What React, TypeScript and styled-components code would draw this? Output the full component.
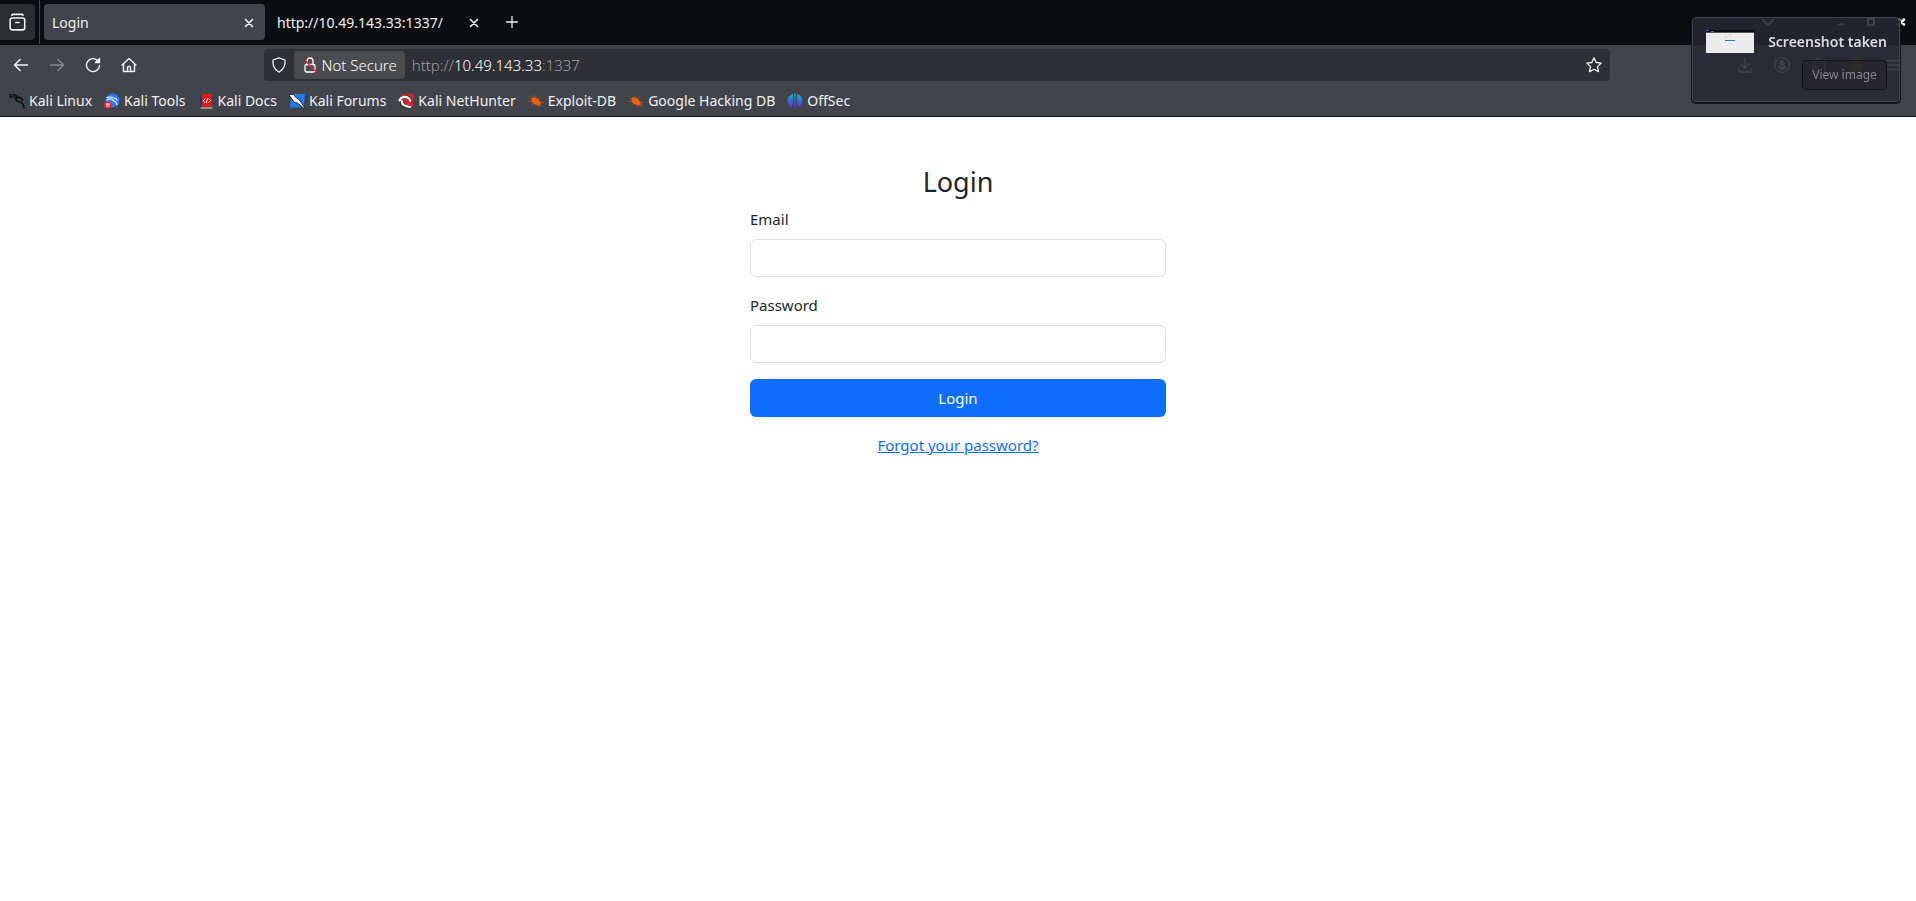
import React from "react";
import styled, { createGlobalStyle } from "styled-components";

const Global = createGlobalStyle`
  * { box-sizing: border-box; }
  body { margin: 0; background: #fff; font: 400 15px/24px "Noto Sans", sans-serif; color: #212529; }
  button, input { font: inherit; }
`;

const Chrome = styled.header`
  background: #42444c;
  color: #f0f0f1;
  font-size: 14px;
  border-bottom: 1px solid #0c0d11;
`;
const IconButton = styled.button<{ $w?: number; $dim?: boolean }>`
  display: flex;
  align-items: center;
  justify-content: center;
  width: ${(p) => p.$w ?? 36}px;
  height: 32px;
  padding: 0;
  border: 0;
  background: transparent;
  color: ${(p) => (p.$dim ? "#85868b" : "#f0f0f1")};
`;
const TabStrip = styled.div`
  display: flex;
  align-items: center;
  height: 45px;
  padding-bottom: 1px;
  background: #0c0d11;
`;
const ViewButton = styled(IconButton)`
  height: 36px;
  background: #2d2e31;
  border-radius: 0 4px 4px 0;
`;
const Divider = styled.span`
  width: 1px;
  height: 44px;
  margin: 0 4px;
  background: #42444c;
`;
const Tab = styled.div<{ $active?: boolean }>`
  display: flex;
  align-items: center;
  justify-content: space-between;
  width: 221px;
  height: 36px;
  padding: 2px 4px 0 8px;
  margin-right: 4px;
  border-radius: 4px;
  background: ${(p) => (p.$active ? "#42444c" : "transparent")};
`;
const WindowButtons = styled.div`
  display: flex;
  margin-left: auto;
`;
const ListTabs = styled(IconButton)`
  margin-right: 40px;
`;
const Toolbar = styled.div`
  display: flex;
  align-items: center;
  justify-content: space-between;
  height: 40px;
  padding: 0 5px 0 3px;
`;
const Group = styled.div`
  display: flex;
`;
const UrlBar = styled.div`
  display: flex;
  align-items: center;
  flex: 0 1 1346px;
  height: 32px;
  background: #2f3036;
  border-radius: 4px;
  font-size: 15px;
  font-weight: 300;
`;
const Security = styled.button`
  display: flex;
  align-items: center;
  gap: 4px;
  height: 28px;
  padding: 0 8px;
  border: 0;
  border-radius: 4px;
  background: #4b4c50;
  color: #fff;
`;
const Address = styled.span`
  flex: 1;
  padding-left: 7px;
  color: #9d9da3;
  b { font-weight: inherit; color: #fff; }
`;
const Bookmarks = styled.nav`
  display: flex;
  gap: 12px;
  height: 31px;
  padding: 0 9px;
  align-items: center;
`;
const Bookmark = styled.a`
  display: flex;
  align-items: center;
  gap: 4px;
  color: #f0f0f1;
  text-decoration: none;
`;
const Toast = styled.aside`
  position: fixed;
  top: 17px;
  right: 16px;
  width: 208px;
  padding: 12px 12px 11px 13px;
  border: 1px solid #42444f;
  border-radius: 4px;
  background: rgba(38, 39, 51, 0.87);
  box-shadow: 0 1px 0 1px #15161b;
`;
const ToastHead = styled.div`
  display: flex;
  justify-content: space-between;
  align-items: flex-start;
  color: #dcdcdf;
  font-size: 14px;
  line-height: 24px;
`;
const ToastTitle = styled.strong`
  font-weight: 600;
`;
const ToastButton = styled.button`
  display: block;
  margin: 6px 0 0 auto;
  width: 85px;
  height: 30px;
  padding: 0;
  border: 1px solid #111217;
  border-radius: 4px;
  background: rgba(38, 37, 43, 0.6);
  color: #85868b;
  font-size: 12px;
`;
const Form = styled.form`
  display: flex;
  flex-direction: column;
  width: 100%;
  max-width: 416px;
  margin: 48px auto;
`;
const Title = styled.h1`
  margin: 0 0 8px;
  font-size: 27px;
  line-height: 34px;
  font-weight: 400;
  text-align: center;
`;
const Label = styled.label`
  margin-bottom: 8px;
`;
const Field = styled.input`
  height: 38px;
  margin-bottom: 16px;
  padding: 6px 12px;
  border: 1px solid #dee2e6;
  border-radius: 6px;
`;
const Submit = styled.button`
  height: 38px;
  margin-bottom: 16px;
  border: 0;
  border-radius: 6px;
  background: #0d6efd;
  color: #fff;
`;
const Forgot = styled.a`
  align-self: center;
  color: #0d6efd;
`;

const Svg = ({ s = 16, children, w = 1.3 }: { s?: number; w?: number; children: React.ReactNode }) => (
  <svg width={s} height={s} viewBox="0 0 16 16" fill="none" stroke="currentColor" strokeWidth={w} strokeLinecap="round" strokeLinejoin="round" aria-hidden="true">{children}</svg>
);
const Close = () => <Svg w={1.6}><path d="M4.500 4.500l7 7M11.500 4.500l-7 7" /></Svg>;
const Bug = () => (
  <Svg>
    <path d="M3 5.500l3.500-1.500 3.500 2 3 4-1 2.500-4-.5-4-2.500z" fill="#f0620c" stroke="none" />
    <path d="M1 4.500l3 2M.5 8.500h4M3.500 12l3-2M7.500 2.500l.5 3M11 4l-.5 3M10.500 14l-1-3M15.500 9.500H12M4 3l1.500 2M14 13l-2-1.500" stroke="#c85518" strokeWidth=".7" />
  </Svg>
);
const Thumbnail = () => (
  <svg width="48" height="23" viewBox="0 0 48 23" aria-hidden="true">
    <path d="M0 0h48v23H0z" fill="#ececec" />
    <path d="M0 0h48v2H0z" fill="#0c0d11" />
    <path d="M0 2h48v1H0z" fill="#55555c" />
    <path d="M0 0h3v1H0zM5 1h3v1H5z" fill="#2a61b0" />
    <path d="M23 5h2M19 7h2" stroke="#c4c4c8" />
    <path d="M19 10.500h10" stroke="#2277ee" />
  </svg>
);

const bookmarks: [string, React.ReactNode][] = [
  ["Kali Linux", (
    <Svg>
      <path d="M.5 2c3-.8 6 .2 8.500 1.500M1.500 4c3-.5 5.500 0 7.500 1M0 3.500l2 1M5 1.500l3 1.500" stroke="#08090b" strokeWidth="1" />
      <path d="M8 4c-2.500 2.500-.5 4.500 3 5 2.500.5 3.500 2.500 4 6M8.500 4.500c2.500-.3 4.500 1 5 3" stroke="#08090b" strokeWidth="1.500" />
    </Svg>
  )],
  ["Kali Tools", (
    <Svg>
      <circle cx="8.500" cy="7.500" r="7" fill="#2777ff" stroke="none" />
      <path d="M3 4.500c3-1 5-.5 7 .5M3 7c3-2 5-1 6.500.5S12 8 13 11.500M10 5q2 0 3 2" stroke="#e9f1ff" strokeWidth="1.200" />
      <circle cx="3.800" cy="12.200" r="3.600" fill="#e5252b" stroke="none" />
      <path d="M2.200 11h3.400M3 11v2.800M4.800 11v2.800" stroke="#fff" strokeWidth=".8" />
    </Svg>
  )],
  ["Kali Docs", (
    <Svg>
      <path d="M2 1h2v14H2z" fill="#173a74" stroke="none" />
      <path d="M4 1h10v13H4z" fill="#e01818" stroke="none" />
      <path d="M3 15h11" stroke="#ddd" strokeWidth="1" />
      <path d="M6.800 6L5.300 7.700l1.500 1.700M11 5.800l1.500 1.700L11 9.200M9.600 5.500L8.300 9.700" stroke="#fff" strokeWidth="1" />
    </Svg>
  )],
  ["Kali Forums", (
    <Svg>
      <path d="M2 1h14l-1.500 13.500H1z" fill="#1e7cf5" stroke="none" />
      <path d="M0 1.500l4.500 0 3 3.500 3 2 5 7.500-1 .5-6-5-3-.5-3-4z" fill="#fff" stroke="#15181d" strokeWidth=".9" />
    </Svg>
  )],
  ["Kali NetHunter", (
    <Svg>
      <path d="M3 1.500L16 1l-1.500 13-5 1z" fill="#e8202e" stroke="none" />
      <path d="M2 8c1-5 9-6 11 0M3.500 8c-1 4 3 6 8 6" stroke="#15181d" strokeWidth="3" />
      <path d="M1.500 7.500c2-5 9-5 11 .5M4 8c-1 3.500 3 5.500 8 6" stroke="#fff" strokeWidth="2.200" />
      <path d="M6 9c1-2 3-2 4 0l1 2c-2 0-4 0-5-2z" fill="#e8202e" stroke="none" />
    </Svg>
  )],
  ["Exploit-DB", <Bug />],
  ["Google Hacking DB", <Bug />],
  ["OffSec", (
    <svg width="16" height="16" viewBox="0 0 16 16" aria-hidden="true">
      <defs><linearGradient id="os" gradientUnits="userSpaceOnUse" x1="8" y1="1" x2="8" y2="15"><stop stopColor="#12b0bf" /><stop offset="1" stopColor="#5a2be0" /></linearGradient></defs>
      <path d="M6 1v10l-1.500 3C2 13 .5 10.500 .5 7.500S2.500 2 6 1zM10 1v10l1.500 3c2.500-1 4-3.500 4-6.500S13.500 2 10 1zM7.300 .5h1.400V16H7.300z" fill="url(#os)" />
    </svg>
  )],
];

export default function App() {
  return (
    <>
      <Global />
      <Chrome>
        <TabStrip>
          <ViewButton $w={35} aria-label="View tabs"><Svg s={18} w={1.4}><rect x="1" y="4.500" width="13" height="10.500" rx="2" /><path d="M2.500 2q.2-.8 1-.8h8q.8 0 1 .8M6 8.500h3" /></Svg></ViewButton>
          <Divider />
          <Tab $active>Login<IconButton $w={24} aria-label="Close tab"><Close /></IconButton></Tab>
          <Tab>http://10.49.143.33:1337/<IconButton $w={24} aria-label="Close tab"><Close /></IconButton></Tab>
          <IconButton aria-label="New tab"><Svg><path d="M8 2.500v11M2.500 8h11" /></Svg></IconButton>
          <WindowButtons>
            <ListTabs aria-label="List tabs"><Svg w={1.500}><path d="M2.500 5.500L8 11l5.500-5.500" /></Svg></ListTabs>
            <IconButton $w={30} aria-label="Minimize"><Svg w={2}><path d="M6 10.500h4" /></Svg></IconButton>
            <IconButton $w={30} aria-label="Maximize"><Svg w={2}><rect x="5" y="5" width="6" height="6" /></Svg></IconButton>
            <IconButton $w={30} aria-label="Close"><Svg w={2.500}><path d="M6 5.500l5 5M11 5.500l-5 5" /></Svg></IconButton>
          </WindowButtons>
        </TabStrip>
        <Toolbar>
          <Group>
            <IconButton aria-label="Back"><Svg w={1.500}><path d="M14.500 8H1.500M7 2.500L1.500 8 7 13.500" /></Svg></IconButton>
            <IconButton $dim aria-label="Forward"><Svg w={1.500}><path d="M1.500 8h13M9 2.500L14.500 8 9 13.500" /></Svg></IconButton>
            <IconButton aria-label="Reload"><Svg w={1.400}><path d="M14.500 8.500A6.500 6.500 0 1 1 12.500 3.400L14 5" /><path d="M14.500 1.500v4h-4z" fill="currentColor" /></Svg></IconButton>
            <IconButton aria-label="Home"><Svg w={1.400}><path d="M1 8l7-6.500L15 8M2.500 7v7.500h11V7M6.500 14v-3.500q0-1 1-1h1q1 0 1 1V14" /></Svg></IconButton>
          </Group>
          <UrlBar>
            <IconButton $w={30} aria-label="Protection"><Svg><path d="M8 .8l6 2.200c.6 5.500-1.500 9.500-6 12.200C3.500 12.500 1.400 8.500 2 3z" /></Svg></IconButton>
            <Security><Svg><rect x="3" y="7.500" width="10" height="7.500" rx="1.500" /><path d="M5 7.500V4a3 3 0 0 1 6 0v3.500" /><path d="M1.500 2l13 13" stroke="#e3174a" /></Svg>Not Secure</Security>
            <Address>http://<b>10.49.143.33</b>:1337</Address>
            <IconButton $w={32} aria-label="Bookmark page"><Svg><path d="M8 .8l2.200 4.700 5 .6-3.700 3.500 1 5.100L8 12.200l-4.500 2.500 1-5.100L.8 6.100l5-.6z" /></Svg></IconButton>
          </UrlBar>
          <Group>
            <IconButton $w={37} aria-label="Downloads"><Svg><path d="M8 1v9M4 7l4 4 4-4M1.500 11.500v1.500q0 2 2 2h9q2 0 2-2v-1.500" /></Svg></IconButton>
            <IconButton $w={37} aria-label="Account"><Svg><circle cx="8" cy="8" r="7.300" /><circle cx="8" cy="6" r="2" fill="currentColor" /><path d="M4.500 10h7q-.8 2.500-3.500 2.500T4.500 10z" fill="currentColor" /></Svg></IconButton>
            <IconButton $w={37} aria-label="Extensions"><Svg><path d="M2 4.500h3.500V3a1.700 1.700 0 0 1 3.500 0v1.500h4.500V15H9v-1.500a1.500 1.500 0 0 0-3 0V15H2v-4h1.500a1.500 1.500 0 0 0 0-3H2z" /></Svg></IconButton>
            <IconButton $w={37} aria-label="Proxy"><Svg><circle cx="8" cy="8" r="6.500" fill="#d8832a" stroke="#b86618" /><path d="M2 8l4-1 2-4 3 3 4-1M4 13l4-3 4 3" stroke="#5c3b20" /></Svg></IconButton>
            <IconButton $w={37} aria-label="Menu"><Svg><path d="M1.500 3.500h13M1.500 8h13M1.500 12.500h13" /></Svg></IconButton>
          </Group>
        </Toolbar>
        <Bookmarks>
          {bookmarks.map(([name, icon]) => <Bookmark href="#" key={name}>{icon}{name}</Bookmark>)}
        </Bookmarks>
      </Chrome>
      <main>
        <Form>
          <Title>Login</Title>
          <Label htmlFor="email">Email</Label>
          <Field id="email" type="email" />
          <Label htmlFor="password">Password</Label>
          <Field id="password" type="password" />
          <Submit type="button">Login</Submit>
          <Forgot href="#">Forgot your password?</Forgot>
        </Form>
      </main>
      <Toast>
        <ToastHead><Thumbnail /><ToastTitle>Screenshot taken</ToastTitle></ToastHead>
        <ToastButton>View image</ToastButton>
      </Toast>
    </>
  );
}
